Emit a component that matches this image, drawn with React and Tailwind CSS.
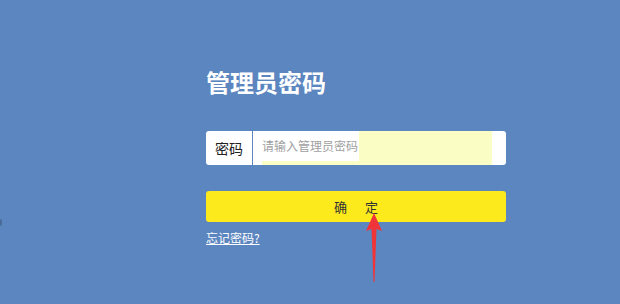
import React from "react";

export default function App() {
  const cjk = { fontFamily: '"Noto Sans CJK SC", "Noto Sans", sans-serif' };
  return (
    <div className="relative w-[620px] h-[304px] overflow-hidden bg-[#5c86bf]" style={cjk}>
      <div className="pl-[206px] pt-[68px] w-[506px] flex flex-col">
        <h1 className="text-[24px] leading-[28px] font-bold text-white">管理员密码</h1>
        <div className="mt-[35px] h-[34px] w-[300px] bg-white rounded-[3px] flex items-stretch">
          <div className="w-[46px] flex items-center justify-center text-[14px] text-[#222]">密码</div>
          <div className="w-px bg-[#5c86bf]" />
          <div className="ml-[9px] w-[230px] bg-[#fafec4] flex items-start">
            <span className="h-[30px] flex items-center bg-white pr-[1px] text-[12px] text-[#a0a0a0]">请输入管理员密码</span>
          </div>
        </div>
        <button className="mt-[26px] h-[31px] w-[300px] bg-[#fcea1d] rounded-[3px] flex items-center justify-center text-[13px] text-[#333]">
          <span>确</span>
          <span className="ml-[18px]">定</span>
        </button>
        <a className="mt-[8px] text-[12px] leading-[16px] text-white underline w-fit">忘记密码?</a>
      </div>
      <svg className="absolute left-[364px] top-[212px]" width="20" height="72" viewBox="0 0 20 72">
        <path d="M10 1 L18 19 L12.5 17 L10.5 70 L9.5 70 L7.5 17 L2 19 Z" fill="#f0353a" />
      </svg>
      <div className="absolute left-[-3px] top-[219px] w-[5px] h-[7px] rounded-full bg-[#4a6a9a]" />
    </div>
  );
}
